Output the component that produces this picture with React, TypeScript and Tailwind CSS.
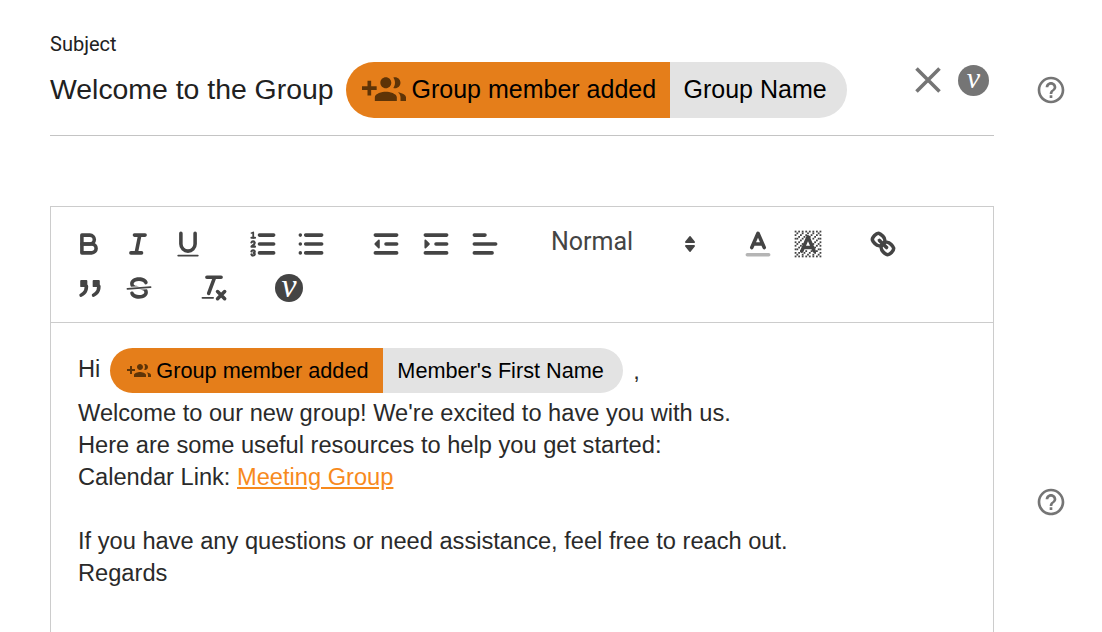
import React from "react";

const GroupAdd = ({ className }: { className: string }) => (
  <svg viewBox="0 0 24 24" className={className} fill="currentColor">
    <path d="M8 10H5V7H3v3H0v2h3v3h2v-3h3v-2zm10 1c1.66 0 2.99-1.34 2.99-3S19.66 5 18 5c-.32 0-.63.05-.91.14.57.81.9 1.79.9 2.86s-.34 2.04-.9 2.86c.28.09.59.14.91.14zm-5 0c1.66 0 2.99-1.34 2.99-3S14.66 5 13 5s-3 1.34-3 3 1.34 3 3 3zm6.62 2.16c.83.73 1.38 1.66 1.38 2.84v2h3v-2c0-1.54-2.37-2.49-4.38-2.84zM13 13c-2 0-6 1-6 3v2h12v-2c0-2-4-3-6-3z" />
  </svg>
);

const Help = () => (
  <svg viewBox="0 0 24 24" className="w-8 h-8 text-[#757575]" fill="currentColor">
    <path d="M11 18h2v-2h-2v2zm1-16C6.48 2 2 6.48 2 12s4.48 10 10 10 10-4.48 10-10S17.52 2 12 2zm0 18c-4.41 0-8-3.59-8-8s3.59-8 8-8 8 3.59 8 8-3.59 8-8 8zm0-14c-2.21 0-4 1.79-4 4h2c0-1.1.9-2 2-2s2 .9 2 2c0 2-3 1.75-3 5h2c0-2.25 3-2.5 3-5 0-2.21-1.79-4-4-4z" />
  </svg>
);

const Q = ({ children }: { children: React.ReactNode }) => (
  <svg viewBox="0 0 18 18" className="w-8 h-8 text-[#444]" fill="none" stroke="currentColor" strokeWidth={2} strokeLinecap="round" strokeLinejoin="round">
    {children}
  </svg>
);

const Btn = ({ w, children }: { w: string; children: React.ReactNode }) => (
  <div className={`${w} h-11 flex items-center justify-center`}>{children}</div>
);

const dots: [number, number][] = [];
for (let y = 2; y < 17; y += 1) {
  for (let x = 2; x < 17; x += 1) {
    const border = x === 2 || x === 16 || y === 2 || y === 16;
    if (border) {
      if ((x + y) % 2 === 0) dots.push([x, y]);
    } else if ((x + y) % 3 === 0 && !(x >= 7 && x <= 11 && y >= 6 && y <= 12)) {
      dots.push([x, y]);
    }
  }
}

const Vee = ({ bg, size, text }: { bg: string; size: string; text: string }) => (
  <div className={`${bg} ${size} rounded-full flex items-center justify-center text-white italic font-['Liberation_Serif',serif] leading-none`}>
    <span className={`${text} -mt-[5px]`}>v</span>
  </div>
);

export default function App() {
  return (
    <div className="w-[1102px] h-[632px] overflow-hidden bg-white font-['Liberation_Sans',sans-serif] text-[#212121]">
      {/* Subject */}
      <div className="flex pl-[50px] pt-[31px]">
        <div className="w-[944px] h-[105px] border-b border-[#c4c4c4] relative">
          <div className="text-[20px] leading-[26px] font-['Roboto',sans-serif]">Subject</div>
          <div className="flex items-center mt-[5px]">
            <span className="text-[28.4px] leading-[56px] mr-[12px] -mt-[3px]">Welcome to the Group</span>
            <div className="flex h-14 text-black text-[25px]">
              <div className="bg-[#e57e1a] rounded-l-[28px] flex items-center pl-[16px] w-[324px]">
                <GroupAdd className="w-[44px] h-[44px] text-[#5e3407] shrink-0 mr-[6px]" />
                <span className="whitespace-nowrap -mt-[1px]">Group member added</span>
              </div>
              <div className="bg-[#e3e3e3] rounded-r-[28px] flex items-center pl-[14px] w-[177px]">
                <span className="whitespace-nowrap">Group Name</span>
              </div>
            </div>
            <div className="ml-auto flex items-center -mt-[20px]">
              <svg viewBox="0 0 26 26" className="w-[26px] h-[26px] text-[#757575] mr-[17px]" stroke="currentColor" strokeWidth={3.6} fill="none">
                <path d="M1.5 1.5l23 23M24.5 1.5l-23 23" />
              </svg>
              <div className="mr-[5px]">
                <Vee bg="bg-[#757575]" size="w-[31px] h-[31px]" text="text-[30px]" />
              </div>
            </div>
          </div>
        </div>
        <div className="ml-[41px] mt-[43px]">
          <Help />
        </div>
      </div>

      {/* Editor */}
      <div className="flex items-center pl-[50px] mt-[70px]">
        <div className="w-[944px] h-[590px] border border-[#cccccc] shrink-0">
          <div className="border-b border-[#cccccc] pl-[13px] pt-[15px] h-[116px]">
            <div className="flex h-11">
              <div className="flex mr-[26px]">
                <Btn w="w-[49.5px]">
                  <Q>
                    <path d="M5,4H9.5A2.5,2.5,0,0,1,12,6.5v0A2.5,2.5,0,0,1,9.5,9H5A0,0,0,0,1,5,9V4A0,0,0,0,1,5,4Z" />
                    <path d="M5,9h5.5A2.5,2.5,0,0,1,13,11.5v0A2.5,2.5,0,0,1,10.5,14H5a0,0,0,0,1,0,0V9A0,0,0,0,1,5,9Z" />
                  </Q>
                </Btn>
                <Btn w="w-[49.5px]">
                  <Q>
                    <path d="M7 4h6M5 14h6M8 14l2-10" />
                  </Q>
                </Btn>
                <Btn w="w-[49.5px]">
                  <Q>
                    <path d="M5,3V9a4.012,4.012,0,0,0,4,4H9a4.012,4.012,0,0,0,4-4V3" />
                    <rect x="3" y="15" width="12" height="1" rx="0.5" fill="currentColor" stroke="none" />
                  </Q>
                </Btn>
              </div>
              <div className="flex mr-[26px]">
                <Btn w="w-[48.5px]">
                  <Q>
                    <path d="M7 4h8M7 9h8M7 14h8" />
                    <path d="M2.5 5.5h2" strokeWidth={1.2} />
                    <path d="M3.5,6A0.5,0.5,0,0,1,3,5.5V3.085l-0.276.138A0.5,0.5,0,0,1,2.053,3c-0.124-.247-0.023-0.324.224-0.447l1-.5A0.5,0.5,0,0,1,4,2.5v3A0.5,0.5,0,0,1,3.5,6Z" fill="currentColor" stroke="none" />
                    <path d="M4.5,10.5h-2c0-.234,1.85-1.076,1.85-2.234A0.959,0.959,0,0,0,2.5,8.156" strokeWidth={1.2} />
                    <path d="M2.5,14.846a0.959,0.959,0,0,0,1.85-.109A0.7,0.7,0,0,0,3.75,14a0.688,0.688,0,0,0,.6-0.736,0.959,0.959,0,0,0-1.85-.109" strokeWidth={1.2} />
                  </Q>
                </Btn>
                <Btn w="w-[48.5px]">
                  <Q>
                    <path d="M6 4h9M6 9h9M6 14h9M3 4h0M3 9h0M3 14h0" />
                  </Q>
                </Btn>
              </div>
              <div className="flex mr-[25px]">
                <Btn w="w-[49.5px]">
                  <Q>
                    <path d="M3 14h12M3 4h12M9 9h6" />
                    <path d="M5 7v4L3 9z" fill="currentColor" strokeWidth={1} />
                  </Q>
                </Btn>
                <Btn w="w-[49.5px]">
                  <Q>
                    <path d="M3 14h12M3 4h12M9 9h6" />
                    <path d="M3 7v4l2-2z" fill="currentColor" strokeWidth={1} />
                  </Q>
                </Btn>
                <Btn w="w-[49.5px]">
                  <Q>
                    <path d="M3 9h12M3 14h10M3 4h6" />
                  </Q>
                </Btn>
              </div>
              <div className="w-[174px] mr-[24px] flex items-center justify-between pl-[16px] pr-[13px] text-[25px] text-[#444]">
                <span className="-mt-[4px] font-['Roboto',sans-serif]">Normal</span>
                <svg viewBox="0 0 12 20" className="w-3 h-5 -mt-px" fill="currentColor" stroke="currentColor" strokeWidth={2} strokeLinejoin="round">
                  <path d="M2 8l4-5 4 5zM2 12l4 5 4-5z" />
                </svg>
              </div>
              <div className="flex mr-[25px]">
                <Btn w="w-[50px]">
                  <Q>
                    <path d="M3 15h12" stroke="#b5b5b5" />
                    <path d="M5.5 11L9 3l3.5 8M11.63 9H6.38" />
                  </Q>
                </Btn>
                <Btn w="w-[50px]">
                  <Q>
                    <g fill="currentColor" stroke="none">
                      {dots.map(([x, y]) => (
                        <rect key={`${x}-${y}`} x={x - 0.5} y={y - 0.5} width="1" height="1" />
                      ))}
                    </g>
                    <path d="M5.5 13L9 5l3.5 8M11.63 11H6.38" />
                  </Q>
                </Btn>
              </div>
              <Btn w="w-[50px]">
                <Q>
                  <path d="M7 7l4 4" />
                  <path d="M8.9,4.577a3.476,3.476,0,0,1,.36,4.679A3.476,3.476,0,0,1,4.577,8.9C3.185,7.5,2.035,6.4,4.217,4.217S7.5,3.185,8.9,4.577Z" />
                  <path d="M13.423,9.1a3.476,3.476,0,0,0-4.679-.36,3.476,3.476,0,0,0,.36,4.679c1.392,1.392,2.5,2.542,4.679.36S14.815,10.5,13.423,9.1Z" />
                </Q>
              </Btn>
            </div>
            <div className="flex h-11 ml-px">
              <div className="flex mr-[25px]">
                <Btn w="w-[49.5px]">
                  <Q>
                    <rect x="4" y="5" width="3" height="3" fill="currentColor" strokeWidth={1} />
                    <rect x="11" y="5" width="3" height="3" fill="currentColor" strokeWidth={1} />
                    <path d="M7,8c0,4.031-3,5-3,5M14,8c0,4.031-3,5-3,5" />
                  </Q>
                </Btn>
                <Btn w="w-[49.5px]">
                  <Q>
                    <path d="M15.5 8.5l-13 1" strokeWidth={1} />
                    <path d="M9.007,8C6.542,7.791,6,7.519,6,6.5,6,5.792,7.283,5,9,5c1.571,0,2.765.679,2.969,1.309a1,1,0,0,0,1.9-.617C13.356,4.106,11.354,3,9,3,6.2,3,4,4.538,4,6.5a3.2,3.2,0,0,0,.5,1.843Z" fill="currentColor" stroke="none" />
                    <path d="M8.984,10C11.457,10.208,12,10.479,12,11.5c0,.708-1.283,1.5-3,1.5-1.571,0-2.765-.679-2.969-1.309a1,1,0,1,0-1.9.617C4.644,13.894,6.646,15,9,15c2.8,0,5-1.538,5-3.5a3.2,3.2,0,0,0-.5-1.843Z" fill="currentColor" stroke="none" />
                  </Q>
                </Btn>
              </div>
              <div className="flex mr-[25px]">
                <Btn w="w-[50px]">
                  <Q>
                    <path d="M5 3h8M6 12l3.35-9M11 11l4 4M15 11l-4 4" />
                    <rect x="2" y="14" width="7" height="1" rx="0.5" fill="currentColor" stroke="none" />
                  </Q>
                </Btn>
              </div>
              <Btn w="w-[50px]">
                <Vee bg="bg-[#444]" size="w-7 h-7" text="text-[34px]" />
              </Btn>
            </div>
          </div>
          <div className="pl-[27px] pt-[25px] text-[23.65px] leading-[32px] text-[#2a2a2a]">
            <div className="flex items-center h-[45px] mb-[1px]">
              <span className="-mt-[4px]">Hi</span>
              <div className="flex h-[45px] ml-[10px] text-black text-[21.7px]">
                <div className="bg-[#e57e1a] rounded-l-[23px] flex items-center pl-[17px] w-[273px]">
                  <GroupAdd className="w-6 h-6 text-[#5e3407] shrink-0 mr-[5px]" />
                  <span className="whitespace-nowrap">Group member added</span>
                </div>
                <div className="bg-[#e3e3e3] rounded-r-[23px] flex items-center pl-[14px] w-[240px]">
                  <span className="whitespace-nowrap">Member's First Name</span>
                </div>
              </div>
              <span className="ml-[10px]">,</span>
            </div>
            <div className="mt-[4px]">Welcome to our new group! We're excited to have you with us.</div>
            <div>Here are some useful resources to help you get started:</div>
            <div>
              Calendar Link: <span className="text-[#f78a1d] underline">Meeting Group</span>
            </div>
            <div className="h-8" />
            <div>If you have any questions or need assistance, feel free to reach out.</div>
            <div>Regards</div>
          </div>
        </div>
        <div className="ml-[41px] mt-[2px]">
          <Help />
        </div>
      </div>
    </div>
  );
}
